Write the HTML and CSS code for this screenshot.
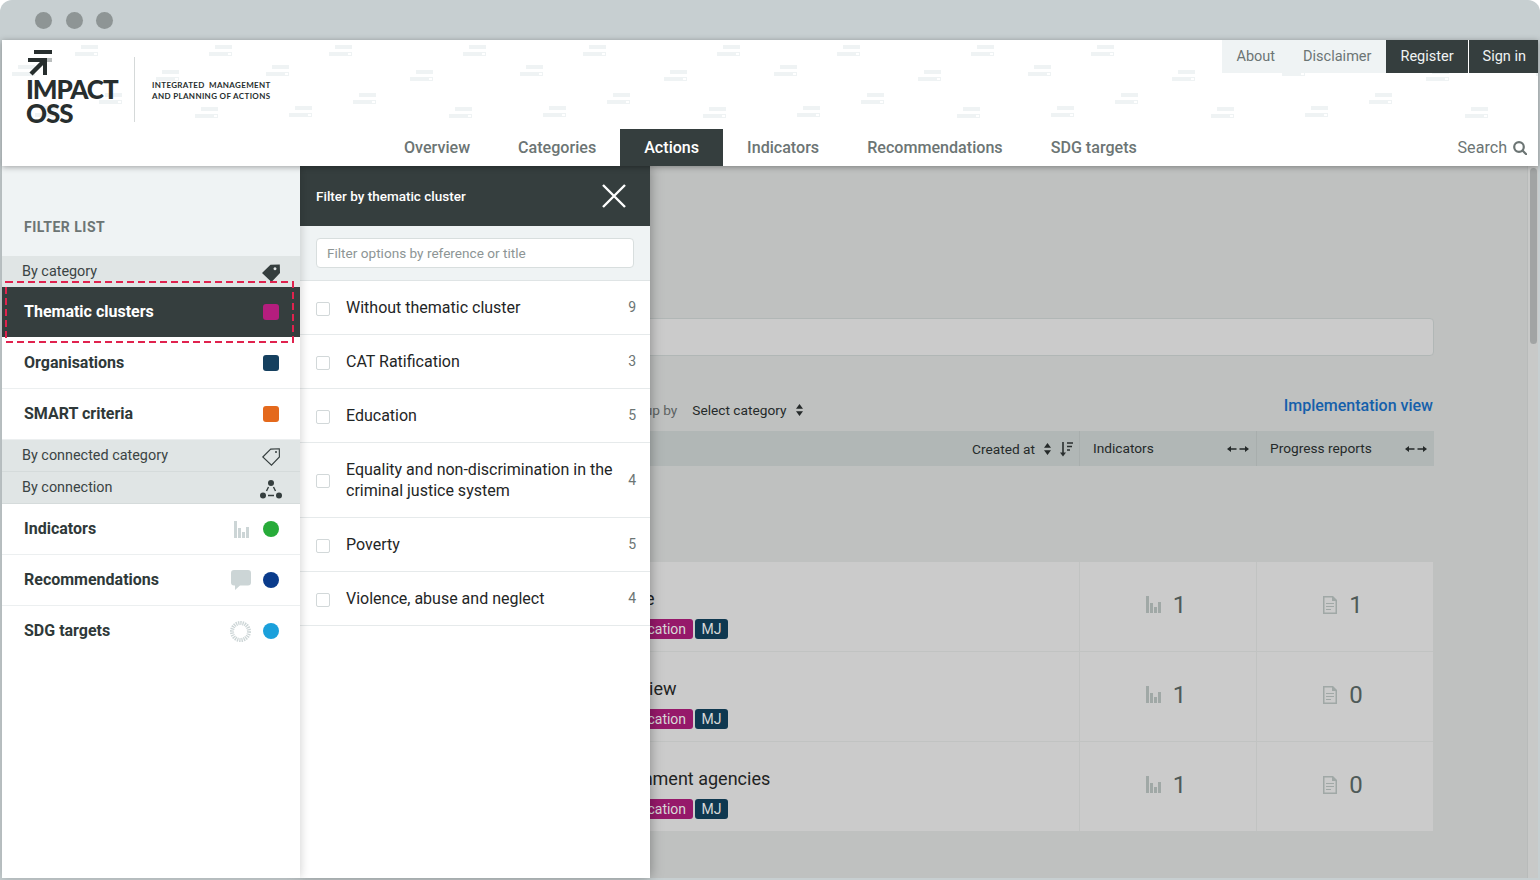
FILE: index.html
```html
<!DOCTYPE html>
<html lang="en">
<head>
    <meta charset="UTF-8">
    <meta name="viewport" content="width=device-width, initial-scale=1.0">
    <title>IMPACT OSS - Actions</title>
    <link rel="stylesheet" href="styles.css">
</head>
<body>
    <div class="window">
        <div class="window-bar">
            <span class="window-dot"></span>
            <span class="window-dot"></span>
            <span class="window-dot"></span>
        </div>

        <header class="site-header">
            <svg class="header-pattern" width="100%" height="126" aria-hidden="true">
                <defs>
                    <g id="dash">
                        <rect x="6" y="0" width="17" height="4" fill="#eff3f4"/>
                        <rect x="0" y="7" width="18" height="4" fill="#eff3f4"/>
                        <rect x="18.5" y="7.5" width="4" height="3" fill="#fff" stroke="#eff3f4"/>
                    </g>
                    <pattern id="dashes" width="254" height="126" patternUnits="userSpaceOnUse">
                        <use href="#dash" x="73" y="5"/>
                        <use href="#dash" x="207" y="5"/>
                        <use href="#dash" x="10" y="25"/>
                        <use href="#dash" x="154" y="30"/>
                        <use href="#dash" x="97" y="53"/>
                        <use href="#dash" x="193" y="67"/>
                        <use href="#dash" x="33" y="66"/>
                    </pattern>
                </defs>
                <rect width="100%" height="90" fill="url(#dashes)"/>
            </svg>

            <div class="header-top">
                <a class="logo">
                    <div class="logo-mark">
                        <svg width="26" height="26" viewBox="0 0 26 26">
                            <rect x="8" y="0" width="18" height="4" fill="#272e2e"/>
                            <rect x="17" y="8" width="9" height="4" fill="#b9bdbd"/>
                            <rect x="2" y="8" width="19" height="4" fill="#272e2e"/>
                            <rect x="17" y="8" width="4" height="17" fill="#272e2e"/>
                            <path d="M19 10 L5 24" stroke="#272e2e" stroke-width="4.5"/>
                        </svg>
                        <div class="logo-name">IMPACT<br>OSS</div>
                    </div>
                    <span class="logo-divider"></span>
                    <div class="logo-claim"><span class="claim-first">INTEGRATED MANAGEMENT</span><br>AND PLANNING OF ACTIONS</div>
                </a>
                <div class="top-links">
                    <a class="top-link">About</a>
                    <a class="top-link">Disclaimer</a>
                    <a class="top-link top-link-dark">Register</a>
                    <a class="top-link top-link-dark">Sign in</a>
                </div>
            </div>

            <nav class="main-nav">
                <a class="nav-item">Overview</a>
                <a class="nav-item">Categories</a>
                <a class="nav-item active">Actions</a>
                <a class="nav-item">Indicators</a>
                <a class="nav-item">Recommendations</a>
                <a class="nav-item">SDG targets</a>
                <a class="nav-search">Search
                    <svg width="14" height="14" viewBox="0 0 14 14" fill="none" stroke="#6c7574" stroke-width="2.2">
                        <circle cx="6" cy="6" r="4.8"/>
                        <path d="M9.5 9.5 L13.2 13.2" stroke-linecap="round"/>
                    </svg>
                </a>
            </nav>
        </header>

        <div class="stage">
            <main class="content">
                <div class="content-search"></div>

                <div class="toolbar">
                    <span class="group-label">Group by</span>
                    <span class="group-select">Select category
                        <svg class="updown" width="7" height="12" viewBox="0 0 7 12"><path d="M3.5 0 L7 4.8 H0 Z M3.5 12 L0 7.2 H7 Z"/></svg>
                    </span>
                    <a class="view-link">Implementation view</a>
                </div>

                <div class="table-head">
                    <div class="head-cell head-main">Created at
                        <svg class="updown" width="7" height="12" viewBox="0 0 7 12"><path d="M3.5 0 L7 4.8 H0 Z M3.5 12 L0 7.2 H7 Z"/></svg>
                        <svg class="sort-icon" width="13" height="15" viewBox="0 0 13 15">
                            <path d="M3 0 V13" stroke="#2a2f2f" stroke-width="1.6"/>
                            <path d="M0 10.5 L3 14.5 L6 10.5 Z" fill="#2a2f2f"/>
                            <path d="M7 1 H13 M7 4.5 H12 M7 8 H10" stroke="#2a2f2f" stroke-width="1.6"/>
                        </svg>
                    </div>
                    <div class="head-cell">Indicators
                        <svg class="hor-arrows" width="22" height="8" viewBox="0 0 22 8"><path d="M0 4 L4 1 V3.2 H9.5 V4.8 H4 V7 Z M22 4 L18 1 V3.2 H12.5 V4.8 H18 V7 Z"/></svg>
                    </div>
                    <div class="head-cell">Progress reports
                        <svg class="hor-arrows" width="22" height="8" viewBox="0 0 22 8"><path d="M0 4 L4 1 V3.2 H9.5 V4.8 H4 V7 Z M22 4 L18 1 V3.2 H12.5 V4.8 H18 V7 Z"/></svg>
                    </div>
                </div>

                <div class="table-rows">
                    <div class="table-row">
                        <div class="row-main">
                            <div class="row-title">Service</div>
                            <div class="row-tags"><span class="tag tag-cluster">Education</span><span class="tag tag-org">MJ</span></div>
                        </div>
                        <div class="row-num">
                            <svg class="bars" width="15" height="17" viewBox="0 0 15 17"><path d="M0 0 H3 V17 H0 Z M4 7 H7 V17 H4 Z M8 11 H11 V17 H8 Z M12 6 H15 V17 H12 Z"/></svg>
                            <span>1</span>
                        </div>
                        <div class="row-num">
                            <svg class="doc" width="14" height="18" viewBox="0 0 14 18"><path fill-rule="evenodd" d="M0 0 H10 L14 4 V18 H0 Z M3 7 V8 H11 V7 Z M3 10 V11 H11 V10 Z M3 13 V14 H8 V13 Z M1.500 1.500 V16.500 H12.500 V5 H9 V1.500 Z"/></svg>
                            <span>1</span>
                        </div>
                    </div>
                    <div class="table-row">
                        <div class="row-main">
                            <div class="row-title">UN review</div>
                            <div class="row-tags"><span class="tag tag-cluster">Education</span><span class="tag tag-org">MJ</span></div>
                        </div>
                        <div class="row-num">
                            <svg class="bars" width="15" height="17" viewBox="0 0 15 17"><path d="M0 0 H3 V17 H0 Z M4 7 H7 V17 H4 Z M8 11 H11 V17 H8 Z M12 6 H15 V17 H12 Z"/></svg>
                            <span>1</span>
                        </div>
                        <div class="row-num">
                            <svg class="doc" width="14" height="18" viewBox="0 0 14 18"><path fill-rule="evenodd" d="M0 0 H10 L14 4 V18 H0 Z M3 7 V8 H11 V7 Z M3 10 V11 H11 V10 Z M3 13 V14 H8 V13 Z M1.500 1.500 V16.500 H12.500 V5 H9 V1.500 Z"/></svg>
                            <span>0</span>
                        </div>
                    </div>
                    <div class="table-row">
                        <div class="row-main">
                            <div class="row-title">Government agencies</div>
                            <div class="row-tags"><span class="tag tag-cluster">Education</span><span class="tag tag-org">MJ</span></div>
                        </div>
                        <div class="row-num">
                            <svg class="bars" width="15" height="17" viewBox="0 0 15 17"><path d="M0 0 H3 V17 H0 Z M4 7 H7 V17 H4 Z M8 11 H11 V17 H8 Z M12 6 H15 V17 H12 Z"/></svg>
                            <span>1</span>
                        </div>
                        <div class="row-num">
                            <svg class="doc" width="14" height="18" viewBox="0 0 14 18"><path fill-rule="evenodd" d="M0 0 H10 L14 4 V18 H0 Z M3 7 V8 H11 V7 Z M3 10 V11 H11 V10 Z M3 13 V14 H8 V13 Z M1.500 1.500 V16.500 H12.500 V5 H9 V1.500 Z"/></svg>
                            <span>0</span>
                        </div>
                    </div>
                </div>
            </main>

            <div class="scrollbar"><div class="scrollbar-thumb"></div></div>

            <div class="filter-overlay">
                <aside class="filter-list">
                    <div class="filter-title">FILTER LIST</div>

                    <div class="filter-group">By category
                        <svg width="18" height="18" viewBox="0 0 18 18"><path fill="#353e3e" fill-rule="evenodd" d="M0 9 L8.500 .8 L17.800 .5 L18 9 L9.500 18 Z M13 3.200 A1.500 1.500 0 1 0 13.010 3.200 Z"/></svg>
                    </div>
                    <div class="filter-item selected">Thematic clusters<span class="swatch swatch-cluster"></span></div>
                    <div class="filter-item">Organisations<span class="swatch swatch-org"></span></div>
                    <div class="filter-item">SMART criteria<span class="swatch swatch-smart"></span></div>

                    <div class="filter-group filter-group-sm">By connected category
                        <svg width="18" height="18" viewBox="0 0 18 18"><path fill="none" stroke="#353e3e" stroke-width="1.100" d="M.8 9 L8.700 1.100 L17.300 .8 L17.400 9 L9.500 17.200 Z"/><circle cx="14" cy="4" r="1" fill="#353e3e"/></svg>
                    </div>
                    <div class="filter-group filter-group-sm">By connection
                        <svg class="connection-icon" width="22" height="20" viewBox="0 0 22 20" fill="#353e3e">
                            <circle cx="11" cy="4" r="3"/><circle cx="3" cy="16.500" r="3"/><circle cx="19" cy="16.500" r="3"/>
                            <path d="M8.500 8 L6.500 12 M13.500 8 L15.500 12 M8 16.500 H14" stroke="#353e3e" stroke-width="1.400" fill="none"/>
                        </svg>
                    </div>

                    <div class="filter-item">Indicators
                        <span class="item-icons">
                            <svg class="item-bars" width="15" height="17" viewBox="0 0 15 17" fill="#ccd5d6"><path d="M0 0 H3 V17 H0 Z M4 7 H7 V17 H4 Z M8 11 H11 V17 H8 Z M12 6 H15 V17 H12 Z"/></svg>
                            <span class="swatch swatch-round swatch-indicators"></span>
                        </span>
                    </div>
                    <div class="filter-item">Recommendations
                        <span class="item-icons">
                            <svg width="20" height="20" viewBox="0 0 20 20" fill="#ccd5d6"><path d="M3 0 H17 A3 3 0 0 1 20 3 V12.500 A3 3 0 0 1 17 15.500 H9 L4 20 V15.500 H3 A3 3 0 0 1 0 12.500 V3 A3 3 0 0 1 3 0 Z"/></svg>
                            <span class="swatch swatch-round swatch-recs"></span>
                        </span>
                    </div>
                    <div class="filter-item">SDG targets
                        <span class="item-icons">
                            <svg width="21" height="21" viewBox="0 0 21 21" fill="none"><circle cx="10.500" cy="10.500" r="8.500" stroke="#ccd5d6" stroke-width="4" stroke-dasharray="1.300 .9"/></svg>
                            <span class="swatch swatch-round swatch-sdg"></span>
                        </span>
                    </div>
                </aside>

                <section class="filter-panel">
                    <div class="panel-head">
                        <span>Filter by thematic cluster</span>
                        <svg width="24" height="24" viewBox="0 0 24 24"><path d="M1 1 L23 23 M23 1 L1 23" stroke="#fff" stroke-width="2.400"/></svg>
                    </div>
                    <div class="panel-search">
                        <input class="panel-input" type="text" placeholder="Filter options by reference or title">
                    </div>
                    <div class="option"><span class="option-check"></span><span class="option-label">Without thematic cluster</span><span class="option-count">9</span></div>
                    <div class="option"><span class="option-check"></span><span class="option-label">CAT Ratification</span><span class="option-count">3</span></div>
                    <div class="option"><span class="option-check"></span><span class="option-label">Education</span><span class="option-count">5</span></div>
                    <div class="option"><span class="option-check"></span><span class="option-label">Equality and non-discrimination in the criminal justice system</span><span class="option-count">4</span></div>
                    <div class="option"><span class="option-check"></span><span class="option-label">Poverty</span><span class="option-count">5</span></div>
                    <div class="option"><span class="option-check"></span><span class="option-label">Violence, abuse and neglect</span><span class="option-count">4</span></div>
                </section>

                <svg class="highlight-box" width="289" height="62">
                    <rect x="1" y="1" width="287" height="60" fill="none" stroke="#e0224e" stroke-width="2" stroke-dasharray="7 4"/>
                </svg>
            </div>
        </div>
    </div>
</body>
</html>
```

FILE: styles.css
```css
* {
    box-sizing: border-box;
}

body {
    margin: 0;
    background-color: #fff;
    font-family: Roboto, "Liberation Sans", sans-serif;
    color: #2b3333;
}

.window {
    height: 880px;
    overflow: hidden;
    display: flex;
    flex-direction: column;
    padding: 0 2px 2px;
    background-color: #c7cfd1;
    border-radius: 12px 12px 0 0;
}

.window-bar {
    height: 40px;
    flex-shrink: 0;
    display: flex;
    align-items: center;
    gap: 13.5px;
    padding-left: 33px;
}

.window-dot {
    width: 17px;
    height: 17px;
    border-radius: 50%;
    background-color: #8e9595;
}

/* header */
.site-header {
    position: relative;
    z-index: 3;
    flex-shrink: 0;
    height: 126px;
    background-color: #fff;
    box-shadow: 0 1px 6px rgba(0, 0, 0, 0.35);
}

.header-pattern {
    position: absolute;
    left: 0;
    top: 0;
}

.header-top {
    position: relative;
    height: 89px;
    display: flex;
    justify-content: space-between;
}

.logo {
    display: flex;
    align-items: flex-start;
}

.logo-mark {
    width: 108px;
    margin: 10px 0 0 24px;
}

.logo-mark svg {
    display: block;
}

.logo-name {
    font-family: Lato, sans-serif;
    font-weight: 900;
    font-size: 26px;
    line-height: 24px;
    letter-spacing: -1.1px;
    color: #272e2e;
    margin-top: 1px;
}

.logo-divider {
    width: 1px;
    height: 65px;
    margin-top: 17px;
    background-color: #d5d9d9;
}

.logo-claim {
    margin: 40px 0 0 17px;
    font-family: Lato, sans-serif;
    font-weight: 700;
    font-size: 8px;
    line-height: 11px;
    letter-spacing: 0.35px;
    color: #272e2e;
}

.claim-first {
    word-spacing: 2px;
}

.top-links {
    display: flex;
    align-self: flex-start;
    height: 33px;
    font-size: 14.5px;
}

.top-link {
    display: flex;
    align-items: center;
    padding: 0 14px 1px;
    background-color: #eff3f4;
    color: #6c7574;
}

.top-link:nth-child(2) {
    padding-right: 15px;
}

.top-link-dark {
    background-color: #353e3e;
    color: #f0f3f3;
    margin-left: 1px;
}

.top-link:nth-child(3) {
    margin-left: 0;
}

.top-link:last-child {
    padding-right: 12px;
}

.main-nav {
    position: relative;
    height: 37px;
    display: flex;
    align-items: stretch;
    padding-left: 378px;
    font-size: 16.1px;
    font-weight: 500;
    color: #6c7574;
}

.nav-item {
    display: flex;
    align-items: center;
    padding: 0 24px;
}

.nav-item.active {
    background-color: #353e3e;
    color: #fff;
}

.nav-search {
    margin-left: auto;
    padding-right: 11px;
    display: flex;
    align-items: center;
    gap: 6px;
    font-weight: 400;
}

/* dimmed page behind the filter */
.stage {
    position: relative;
    flex: 1;
    min-height: 0;
    display: flex;
    background-color: #bfc1c0;
}

.content {
    flex: 1;
    min-width: 0;
    padding: 152px 94px 0 594px;
    font-size: 13.7px;
    color: #252a2a;
}

.content-search {
    height: 38px;
    margin-right: -1px;
    background-color: #cbcbcb;
    border: 1px solid #b1b7b6;
    border-radius: 4px;
}

.toolbar {
    height: 75px;
    display: flex;
    align-items: center;
    padding: 35px 0 3px 27px;
}

.group-label {
    color: #5d6363;
    margin-right: 15px;
}

.group-select {
    display: flex;
    align-items: center;
    gap: 10px;
}

.updown {
    fill: #252a2a;
}

.view-link {
    margin-left: auto;
    font-size: 16px;
    font-weight: 500;
    color: #1560ab;
    margin-top: -9px;
}

.table-head {
    height: 35px;
    margin-right: -1px;
    display: grid;
    grid-template-columns: 1fr 177px 178px;
    background-color: #b1b7b6;
}

.head-cell {
    display: flex;
    align-items: center;
    justify-content: space-between;
    padding: 0 7px 2px 13px;
    border-left: 1px solid #a8aead;
}

.head-main {
    justify-content: flex-end;
    gap: 9px;
    padding: 1px 6px 0 0;
    border-left: none;
}

.hor-arrows {
    fill: #252a2a;
    margin-top: 2px;
}

.table-rows {
    margin-top: 96px;
}

.table-row {
    height: 90px;
    display: grid;
    grid-template-columns: 1fr 177px 177px;
    background-color: #cbcbcb;
    border-bottom: 1px solid #c1c3c2;
}

.table-row:last-child {
    border-bottom-color: transparent;
    background-clip: padding-box;
}

.row-main {
    padding-top: 26px;
}

.row-title {
    font-size: 18px;
    line-height: 22px;
    color: #1f2323;
}

.row-tags {
    display: flex;
    gap: 2px;
    margin-top: 9px;
    padding-left: 21px;
}

.tag {
    height: 20px;
    display: flex;
    align-items: center;
    padding: 0 7px;
    border-radius: 3px;
    font-size: 14px;
    color: #d8d8d8;
}

.tag-cluster {
    background-color: #96196a;
}

.tag-org {
    padding: 0 6.5px;
    background-color: #0f3850;
}

.row-num {
    display: flex;
    align-items: center;
    justify-content: center;
    gap: 12px;
    border-left: 1px solid #c1c3c2;
    font-size: 24px;
    color: #4f5a58;
    padding: 0 4px 4px 0;
}

.bars,
.doc {
    fill: #a0a8a6;
}

.scrollbar {
    width: 11px;
    flex-shrink: 0;
    padding: 2px 1px 0 2px;
    background-color: #c8c9c8;
    border-left: 1px solid #b8bbba;
}

.scrollbar-thumb {
    height: 176px;
    border-radius: 4px;
    background-color: #a1a4a4;
}

/* filter panels on top of the page */
.filter-overlay {
    position: absolute;
    left: 0;
    top: 0;
    bottom: 0;
    z-index: 2;
    display: flex;
}

.filter-list {
    position: relative;
    z-index: 1;
    width: 298px;
    background-color: #fff;
    box-shadow: 0 0 10px rgba(0, 0, 0, 0.2);
}

.filter-title {
    height: 90px;
    padding: 54px 0 0 22px;
    background-color: #eff3f4;
    font-size: 14px;
    font-weight: 700;
    letter-spacing: 0.5px;
    line-height: 14px;
    color: #6c7574;
}

.filter-group {
    height: 31px;
    display: flex;
    align-items: center;
    justify-content: space-between;
    padding: 0 20px 1px 20px;
    background-color: #e0e5e5;
    font-size: 14.4px;
    color: #3b4444;
}

.filter-group svg {
    margin-top: 3px;
}

.filter-group .connection-icon {
    margin-right: -2px;
}

.filter-group-sm {
    height: 32px;
    border-bottom: 1px solid #d5dbdb;
}

.filter-group-sm:last-of-type {
    border-bottom: none;
}

.filter-item {
    height: 51px;
    display: flex;
    align-items: center;
    justify-content: space-between;
    padding: 0 21px 2px 22px;
    border-bottom: 1px solid #eceff0;
    font-size: 16px;
    font-weight: 700;
    color: #2f3939;
}

.filter-item:last-child {
    height: 50px;
    border-bottom: none;
}

.filter-item .swatch {
    margin-top: 2px;
}

.filter-item.selected {
    height: 50px;
    margin-bottom: 1px;
    background-color: #353e3e;
    border-bottom: none;
    color: #fff;
}

.item-icons {
    display: flex;
    align-items: center;
    gap: 12px;
    margin-top: 2px;
}

.item-icons .swatch {
    margin-top: 0;
}

.item-bars {
    margin-right: 2px;
}

.swatch {
    width: 16px;
    height: 16px;
    border-radius: 3px;
}

.swatch-round {
    border-radius: 50%;
}

.swatch-cluster {
    background-color: #b51d7e;
}

.swatch-org {
    background-color: #15405f;
}

.swatch-smart {
    background-color: #e4691c;
}

.swatch-indicators {
    background-color: #27ab39;
}

.swatch-recs {
    background-color: #0a3b8b;
}

.swatch-sdg {
    background-color: #1ba0db;
}

.highlight-box {
    position: absolute;
    left: 3px;
    top: 115px;
    z-index: 2;
}

.filter-panel {
    width: 350px;
    background-color: #fff;
    box-shadow: 0 0 12px rgba(0, 0, 0, 0.35);
}

.panel-head {
    height: 60px;
    display: flex;
    align-items: center;
    justify-content: space-between;
    padding: 0 24px 0 16px;
    background-color: #353e3e;
    font-size: 13.5px;
    font-weight: 500;
    color: #fff;
}

.panel-search {
    height: 55px;
    padding: 12px 16px 0;
    background-color: #eff3f4;
    border-bottom: 1px solid #dfe4e5;
}

.panel-input {
    display: block;
    width: 100%;
    height: 30px;
    padding: 0 10px;
    border: 1px solid #d8dede;
    border-radius: 4px;
    background-color: #fff;
    font-family: Roboto, "Liberation Sans", sans-serif;
    font-size: 13.6px;
}

.panel-input::placeholder {
    color: #8d9595;
    opacity: 1;
}

.option {
    display: flex;
    align-items: center;
    padding: 16px 14px 16px 16px;
    border-bottom: 1px solid #e6eaeb;
    font-size: 16px;
    line-height: 21px;
    color: #1f2626;
}

.option-check {
    width: 14px;
    height: 14px;
    flex-shrink: 0;
    margin: 2px 16px 0 0;
    border: 1px solid #d2d8d9;
    border-radius: 2px;
    background-color: #fff;
}

.option-label {
    flex: 1;
    padding-right: 8px;
}

.option-count {
    font-size: 14px;
    color: #6c7574;
}
```
